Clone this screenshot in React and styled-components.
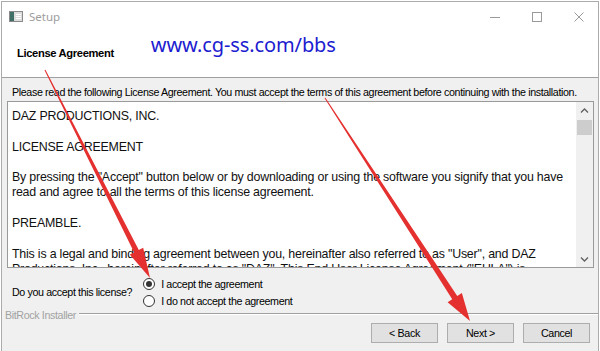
import React from "react";
import styled, { createGlobalStyle } from "styled-components";

const GlobalStyle = createGlobalStyle`
  html, body { margin: 0; padding: 0; background: #ffffff; }
  body {
    width: 600px;
    height: 351px;
    overflow: hidden;
    font-family: "Liberation Sans", Arial, sans-serif;
  }
  #root { position: relative; padding: 1px 1px 0 1px; }
`;

const Window = styled.div`
  box-sizing: border-box;
  width: 598px;
  height: 350px;
  border: 1px solid #ababab;
  border-bottom: none;
  background: #f0f0f0;
  display: flex;
  flex-direction: column;
`;

const TitleBar = styled.div`
  height: 29px;
  background: #ffffff;
  display: flex;
  align-items: center;
  padding-left: 7px;
`;

const TitleText = styled.span`
  margin-left: 6px;
  font-family: "Noto Sans", "Open Sans", sans-serif;
  font-size: 11.5px;
  color: #9d9d9d;
`;

const Controls = styled.div`
  margin-left: auto;
  display: flex;
  align-items: center;
  gap: 32px;
  padding-right: 14px;
`;

const Header = styled.div`
  height: 46px;
  background: #ffffff;
  border-bottom: 1px solid #a0a0a0;
  display: flex;
  align-items: flex-start;
  padding-left: 15px;
`;

const HeaderTitle = styled.div`
  margin-top: 15px;
  font-weight: bold;
  font-size: 11.2px;
  letter-spacing: -0.35px;
  line-height: 14px;
  color: #000;
`;

const SiteLink = styled.div`
  margin-top: 1px;
  margin-left: 37px;
  font-family: "Noto Sans", "Open Sans", sans-serif;
  font-size: 20px;
  letter-spacing: -0.1px;
  line-height: 26px;
  color: #1c1cd0;
`;

const Body = styled.div`
  display: flex;
  flex-direction: column;
  padding: 7px 4px 0 5px;
`;

const DialogText = styled.div`
  font-size: 10.7px;
  letter-spacing: -0.37px;
  line-height: 14px;
  color: #000;
  white-space: nowrap;
`;

const Intro = styled(DialogText)`
  padding-left: 5px;
`;

const TextBox = styled.div`
  margin-top: 2px;
  height: 167px;
  box-sizing: border-box;
  border: 1px solid #9a9a9a;
  background: #ffffff;
  display: flex;
`;

const TextContent = styled.div`
  flex: 1;
  overflow: hidden;
  padding: 7px 0 0 4px;
  font-size: 12.4px;
  letter-spacing: -0.2px;
  line-height: 15.3px;
  color: #111;
`;

const Line = styled.div`
  white-space: nowrap;
  height: 15.3px;
`;

const Scrollbar = styled.div`
  width: 17px;
  background: #f0f0f0;
  display: flex;
  flex-direction: column;
  align-items: center;
`;

const ScrollButton = styled.div`
  width: 17px;
  height: 17px;
  display: flex;
  align-items: center;
  justify-content: center;
  margin-top: ${(p) => (p.$bottom ? "auto" : "0")};
`;

const Thumb = styled.div`
  width: 15px;
  height: 15px;
  margin-top: 1px;
  background: #cdcdcd;
`;

const AcceptRow = styled.div`
  display: flex;
  align-items: center;
  gap: 11px;
  margin-top: 7px;
  padding-left: 5px;
`;

const RadioGroup = styled.div`
  display: flex;
  flex-direction: column;
`;

const RadioOption = styled.label`
  height: 17px;
  display: flex;
  align-items: center;
  gap: 6px;
`;

const RadioCircle = styled.span`
  position: relative;
  box-sizing: border-box;
  width: 12px;
  height: 12px;
  border-radius: 50%;
  border: 1px solid #333;
  background: #fff;
  &::after {
    content: "";
    display: ${(p) => (p.$checked ? "block" : "none")};
    position: absolute;
    left: 2px;
    top: 2px;
    width: 6px;
    height: 6px;
    border-radius: 50%;
    background: #333;
  }
`;

const LegendRow = styled.div`
  display: flex;
  align-items: flex-start;
  gap: 3px;
  padding-left: 3px;
`;

const LegendText = styled(DialogText)`
  color: #a2a2a2;
  line-height: 12px;
`;

const Rule = styled.div`
  flex: 1;
  margin-top: 4px;
  border-top: 1px solid #a0a0a0;
  border-bottom: 1px solid #ffffff;
`;

const ButtonRow = styled.div`
  display: flex;
  justify-content: flex-end;
  gap: 9px;
  padding-right: 8px;
  margin-top: 2px;
`;

const Button = styled.button`
  box-sizing: border-box;
  width: 67px;
  height: 20px;
  padding: 0;
  border: 1px solid #adadad;
  background: #e1e1e1;
  font-family: "Liberation Sans", Arial, sans-serif;
  font-size: 10.7px;
  letter-spacing: -0.37px;
  color: #000;
`;

const Overlay = styled.svg`
  position: absolute;
  left: 0;
  top: 0;
  width: 600px;
  height: 351px;
  pointer-events: none;
`;

function arrowPoints(sx, sy, tx, ty, headLen, headHalf, shaftHalf) {
  const dx = tx - sx;
  const dy = ty - sy;
  const len = Math.hypot(dx, dy);
  const ux = dx / len;
  const uy = dy / len;
  const nx = -uy;
  const ny = ux;
  const bx = tx - ux * headLen;
  const by = ty - uy * headLen;
  const pts = [
    [sx + nx * 0.5, sy + ny * 0.5],
    [bx + nx * shaftHalf, by + ny * shaftHalf],
    [bx + nx * headHalf, by + ny * headHalf],
    [tx, ty],
    [bx - nx * headHalf, by - ny * headHalf],
    [bx - nx * shaftHalf, by - ny * shaftHalf],
    [sx - nx * 0.5, sy - ny * 0.5],
  ];
  return pts.map((p) => p.map((v) => v.toFixed(2)).join(",")).join(" ");
}

const AppIcon = () => (
  <svg width="14" height="11" viewBox="0 0 14 11">
    <rect x="0.5" y="0.5" width="13" height="10" fill="#dcdcdc" stroke="#8a8a8a" />
    <rect x="1" y="1" width="4" height="9" fill="#3e6e66" />
    <rect x="7" y="3" width="5" height="1" fill="#ffffff" />
    <rect x="7" y="5" width="5" height="1" fill="#ffffff" />
    <rect x="7" y="7" width="5" height="1" fill="#ffffff" />
  </svg>
);

const MinIcon = () => (
  <svg width="10" height="10" viewBox="0 0 10 10">
    <line x1="0" y1="5.5" x2="10" y2="5.5" stroke="#9a9a9a" strokeWidth="1" />
  </svg>
);

const MaxIcon = () => (
  <svg width="10" height="10" viewBox="0 0 10 10">
    <rect x="0.5" y="0.5" width="9" height="9" fill="none" stroke="#9a9a9a" strokeWidth="1" />
  </svg>
);

const CloseIcon = () => (
  <svg width="10" height="10" viewBox="0 0 10 10">
    <path d="M0.5 0.5 L9.5 9.5 M9.5 0.5 L0.5 9.5" stroke="#9a9a9a" strokeWidth="1" />
  </svg>
);

const Chevron = ({ down }) => (
  <svg width="9" height="6" viewBox="0 0 9 6">
    <path
      d={down ? "M1 1.5 L4.5 5 L8 1.5" : "M1 4.5 L4.5 1 L8 4.5"}
      fill="none"
      stroke="#606060"
      strokeWidth="1.3"
    />
  </svg>
);

const licenseLines = [
  "DAZ PRODUCTIONS, INC.",
  "",
  "LICENSE AGREEMENT",
  "",
  "By pressing the \"Accept\" button below or by downloading or using the software you signify that you have",
  "read and agree to all the terms of this license agreement.",
  "",
  "PREAMBLE.",
  "",
  "This is a legal and binding agreement between you, hereinafter also referred to as \"User\", and DAZ",
  "Productions, Inc., hereinafter referred to as \"DAZ\". This End User License Agreement (\"EULA\") is",
];

export default function App() {
  return (
    <>
      <GlobalStyle />
      <Window>
        <TitleBar>
          <AppIcon />
          <TitleText>Setup</TitleText>
          <Controls>
            <MinIcon />
            <MaxIcon />
            <CloseIcon />
          </Controls>
        </TitleBar>
        <Header>
          <HeaderTitle>License Agreement</HeaderTitle>
          <SiteLink>www.cg-ss.com/bbs</SiteLink>
        </Header>
        <Body>
          <Intro>
            Please read the following License Agreement. You must accept the terms of this agreement before continuing with the installation.
          </Intro>
          <TextBox>
            <TextContent>
              {licenseLines.map((l, i) => (
                <Line key={i}>{l || "\u00a0"}</Line>
              ))}
            </TextContent>
            <Scrollbar>
              <ScrollButton>
                <Chevron />
              </ScrollButton>
              <Thumb />
              <ScrollButton $bottom>
                <Chevron down />
              </ScrollButton>
            </Scrollbar>
          </TextBox>
          <AcceptRow>
            <DialogText>Do you accept this license?</DialogText>
            <RadioGroup>
              <RadioOption>
                <RadioCircle $checked />
                <DialogText>I accept the agreement</DialogText>
              </RadioOption>
              <RadioOption>
                <RadioCircle />
                <DialogText>I do not accept the agreement</DialogText>
              </RadioOption>
            </RadioGroup>
          </AcceptRow>
        </Body>
        <LegendRow>
          <LegendText>BitRock Installer</LegendText>
          <Rule />
        </LegendRow>
        <ButtonRow>
          <Button>&lt; Back</Button>
          <Button>Next &gt;</Button>
          <Button>Cancel</Button>
        </ButtonRow>
      </Window>
      <Overlay viewBox="0 0 600 351">
        <polygon points={arrowPoints(45, 70, 150, 278, 30, 7.5, 2.6)} fill="#e4302e" />
        <polygon points={arrowPoints(325, 98, 470, 321, 28, 8.5, 3)} fill="#e4302e" />
      </Overlay>
    </>
  );
}
